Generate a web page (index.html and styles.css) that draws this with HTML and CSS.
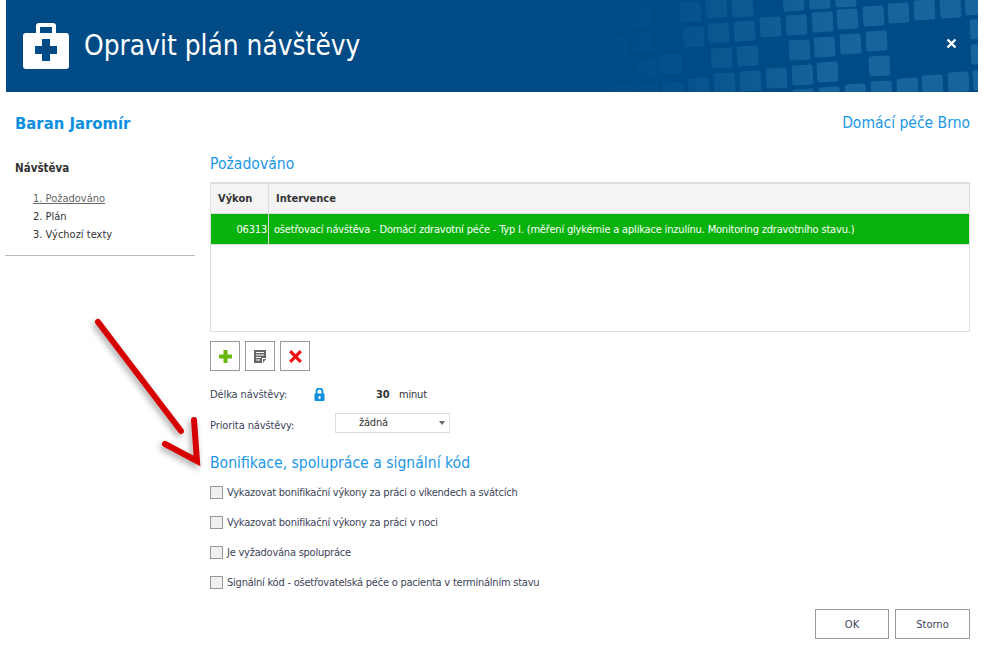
FILE: index.html
```html
<!DOCTYPE html>
<html lang="cs">
<head>
  <meta charset="UTF-8">
  <title>Opravit plán návštěvy</title>
  <link rel="stylesheet" href="styles.css">
</head>
<body>
<div class="page">

  <!-- hlavicka dialogu -->
  <div class="header">
    <svg class="header-bg" width="972" height="92" viewBox="6 0 972 92">
      <defs>
        <linearGradient id="fade" gradientUnits="userSpaceOnUse" x1="640" y1="0" x2="830" y2="0">
          <stop offset="0" stop-color="#024c87"/>
          <stop offset="1" stop-color="#16649b"/>
        </linearGradient>
      </defs>
      <g fill="url(#fade)">
        <rect x="706" y="-2" width="21" height="20" rx="2" transform="rotate(-3 716 8)"/>
        <rect x="732" y="-3" width="21" height="20" rx="2" transform="rotate(-3 742 7)"/>
        <rect x="783" y="-9" width="21" height="20" rx="2" transform="rotate(-3 793 1)"/>
        <rect x="809" y="-11" width="21" height="20" rx="2" transform="rotate(-3 819 -1)"/>
        <rect x="835" y="-13" width="21" height="20" rx="2" transform="rotate(-3 845 -3)"/>
        <rect x="680" y="2" width="21" height="20" rx="2" transform="rotate(-3 690 12)"/>
        <rect x="630" y="7" width="21" height="20" rx="2" transform="rotate(-3 640 17)"/>
        <rect x="632" y="32" width="21" height="20" rx="2" transform="rotate(-3 642 42)"/>
        <rect x="607" y="37" width="21" height="20" rx="2" transform="rotate(-3 617 47)"/>
        <rect x="609" y="60" width="21" height="20" rx="2" transform="rotate(-3 619 70)"/>
        <rect x="635" y="58" width="21" height="20" rx="2" transform="rotate(-3 645 68)"/>
        <rect x="660" y="54" width="21" height="20" rx="2" transform="rotate(-3 670 64)"/>
        <rect x="683" y="27" width="21" height="20" rx="2" transform="rotate(-3 693 37)"/>
        <rect x="613" y="85" width="21" height="20" rx="2" transform="rotate(-3 623 95)"/>
        <rect x="637" y="84" width="21" height="20" rx="2" transform="rotate(-3 647 94)"/>
        <rect x="663" y="83" width="21" height="20" rx="2" transform="rotate(-3 673 93)"/>
        <rect x="688" y="78" width="21" height="20" rx="2" transform="rotate(-3 698 88)"/>
        <rect x="708" y="23" width="21" height="20" rx="2" transform="rotate(-3 718 33)"/>
        <rect x="734" y="21" width="21" height="20" rx="2" transform="rotate(-3 744 31)"/>
        <rect x="760" y="17" width="21" height="20" rx="2" transform="rotate(-3 770 27)"/>
        <rect x="786" y="15" width="21" height="20" rx="2" transform="rotate(-3 796 25)"/>
        <rect x="812" y="12" width="21" height="20" rx="2" transform="rotate(-3 822 22)"/>
        <rect x="837" y="9" width="21" height="20" rx="2" transform="rotate(-3 847 19)"/>
        <rect x="863" y="6" width="21" height="20" rx="2" transform="rotate(-3 873 16)"/>
        <rect x="888" y="3" width="21" height="20" rx="2" transform="rotate(-3 898 13)"/>
        <rect x="914" y="0" width="21" height="20" rx="2" transform="rotate(-3 924 10)"/>
        <rect x="940" y="-2" width="21" height="20" rx="2" transform="rotate(-3 950 8)"/>
        <rect x="965" y="-5" width="21" height="20" rx="2" transform="rotate(-3 975 5)"/>
        <rect x="711" y="48" width="21" height="20" rx="2" transform="rotate(-3 721 58)"/>
        <rect x="737" y="46" width="21" height="20" rx="2" transform="rotate(-3 747 56)"/>
        <rect x="789" y="40" width="21" height="20" rx="2" transform="rotate(-3 799 50)"/>
        <rect x="814" y="37" width="21" height="20" rx="2" transform="rotate(-3 824 47)"/>
        <rect x="840" y="34" width="21" height="20" rx="2" transform="rotate(-3 850 44)"/>
        <rect x="866" y="31" width="21" height="20" rx="2" transform="rotate(-3 876 41)"/>
        <rect x="970" y="19" width="21" height="20" rx="2" transform="rotate(-3 980 29)"/>
        <rect x="971" y="44" width="21" height="20" rx="2" transform="rotate(-3 981 54)"/>
        <rect x="714" y="73" width="21" height="20" rx="2" transform="rotate(-3 724 83)"/>
        <rect x="740" y="71" width="21" height="20" rx="2" transform="rotate(-3 750 81)"/>
        <rect x="766" y="68" width="21" height="20" rx="2" transform="rotate(-3 776 78)"/>
        <rect x="792" y="65" width="21" height="20" rx="2" transform="rotate(-3 802 75)"/>
        <rect x="817" y="62" width="21" height="20" rx="2" transform="rotate(-3 827 72)"/>
        <rect x="869" y="56" width="21" height="20" rx="2" transform="rotate(-3 879 66)"/>
        <rect x="793" y="89" width="21" height="20" rx="2" transform="rotate(-3 803 99)"/>
        <rect x="819" y="87" width="21" height="20" rx="2" transform="rotate(-3 829 97)"/>
        <rect x="845" y="84" width="21" height="20" rx="2" transform="rotate(-3 855 94)"/>
        <rect x="871" y="81" width="21" height="20" rx="2" transform="rotate(-3 881 91)"/>
        <rect x="897" y="78" width="21" height="20" rx="2" transform="rotate(-3 907 88)"/>
        <rect x="922" y="75" width="21" height="20" rx="2" transform="rotate(-3 932 85)"/>
        <rect x="948" y="72" width="21" height="20" rx="2" transform="rotate(-3 958 82)"/>
        <rect x="973" y="70" width="21" height="20" rx="2" transform="rotate(-3 983 80)"/>
      </g>
    </svg>
    <svg class="header-icon" width="46" height="46" viewBox="0 0 46 46">
      <path d="M13 10V3a3 3 0 0 1 3-3h14a3 3 0 0 1 3 3v7h-4V4H17v6z" fill="#fff"/>
      <rect x="0" y="10" width="46" height="36" rx="3" fill="#fff"/>
      <path d="M19 16h8v7h7v8h-7v7h-8v-7h-7v-8h7z" fill="#004a85"/>
    </svg>
    <h1 class="header-title">Opravit plán návštěvy</h1>
    <svg class="header-close" width="11" height="11" viewBox="0 0 11 11">
      <path d="M1.5 1.5l8 8M9.5 1.5l-8 8" stroke="#fff" stroke-width="2.4"/>
    </svg>
  </div>

  <div class="top-row">
    <div class="patient">Baran Jaromír</div>
    <div class="agency">Domácí péče Brno</div>
  </div>

  <div class="main">
    <div class="side">
      <div class="side-title">Návštěva</div>
      <ul class="side-menu">
        <li class="active">1. Požadováno</li>
        <li>2. Plán</li>
        <li>3. Výchozí texty</li>
      </ul>
    </div>

    <div class="content">
      <h2 class="section">Požadováno</h2>

      <div class="grid">
        <div class="grid-row grid-head">
          <div class="col-code">Výkon</div>
          <div class="col-text">Intervence</div>
        </div>
        <div class="grid-row grid-selected">
          <div class="col-code">06313</div>
          <div class="col-text">ošetřovací návštěva - Domácí zdravotní péče - Typ I. (měření glykémie a aplikace inzulínu. Monitoring zdravotního stavu.)</div>
        </div>
      </div>

      <div class="toolbar">
        <button class="tool">
          <svg width="13" height="13" viewBox="0 0 13 13"><path d="M4.500 0h4v4.500H13v4H8.500V13h-4V8.500H0v-4h4.500z" fill="#6cb70e"/></svg>
        </button>
        <button class="tool">
          <svg width="12" height="13" viewBox="0 0 12 13">
            <path d="M0 0h12v8H8v5H0z" fill="#666"/>
            <path d="M9 9h3l-3 4z" fill="#666"/>
            <path d="M2 2.500h8M2 5h8M2 7.500h5M2 10h4" stroke="#fff" stroke-width="1"/>
          </svg>
        </button>
        <button class="tool">
          <svg width="13" height="13" viewBox="0 0 13 13"><path d="M1.200 1.200l10.600 10.600M11.800 1.200L1.200 11.800" stroke="#f01010" stroke-width="3.200"/></svg>
        </button>
      </div>

      <div class="field field-length">
        <span class="field-label">Délka návštěvy:</span>
        <svg class="lock" width="11" height="13" viewBox="0 0 11 13">
          <path d="M2.500 6V3.500a3 3 0 0 1 6 0V6" fill="none" stroke="#0a8fdc" stroke-width="1.800"/>
          <rect x="0.500" y="5.500" width="10" height="7.500" rx="1" fill="#0a8fdc"/>
          <rect x="4.500" y="8" width="2" height="3" fill="#fff"/>
        </svg>
        <b class="field-num">30</b>
        <span class="field-unit">minut</span>
      </div>

      <div class="field field-priority">
        <span class="field-label">Priorita návštěvy:</span>
        <div class="select">žádná<span class="select-arrow"></span></div>
      </div>

      <h2 class="section section-second">Bonifikace, spolupráce a signální kód</h2>

      <label class="check"><span class="box"></span>Vykazovat bonifikační výkony za práci o víkendech a svátcích</label>
      <label class="check"><span class="box"></span>Vykazovat bonifikační výkony za práci v noci</label>
      <label class="check"><span class="box"></span>Je vyžadována spolupráce</label>
      <label class="check"><span class="box"></span>Signální kód - ošetřovatelská péče o pacienta v terminálním stavu</label>

      <div class="actions">
        <button class="btn btn-ok">OK</button>
        <button class="btn btn-cancel">Storno</button>
      </div>
    </div>
  </div>

  <!-- cervena sipka pres obsah -->
  <svg class="arrow" width="130" height="170" viewBox="90 310 130 170">
    <path d="M98 322L181 431M194 420L197 461L165 444" fill="none" stroke="#d60000" stroke-width="6" stroke-linecap="round" stroke-linejoin="miter"/>
  </svg>
</div>
</body>
</html>
```

FILE: styles.css
```css
body {
  margin: 0;
  background-color: #fff;
  font-family: "DejaVu Sans", sans-serif;
  font-stretch: condensed;
  font-size: 11px;
  letter-spacing: -0.2px;
  color: #333;
}

.page {
  position: relative;
  width: 973px;
  height: 655px;
  margin-left: 5px;
  overflow: hidden;
}

.header {
  position: relative;
  display: flex;
  align-items: center;
  height: 92px;
  margin-left: 1px;
  padding-left: 17px;
  background-color: #004a85;
  color: #fff;
  overflow: hidden;
}
.header-bg {
  position: absolute;
  top: 0;
  left: 0;
}
.header-icon {
  position: relative;
  margin-top: -1px;
}
.header-title {
  position: relative;
  margin: 0 0 2px 15px;
  font-size: 27.800px;
  font-weight: normal;
  letter-spacing: 0;
}
.header-close {
  position: absolute;
  top: 38px;
  right: 21px;
}

.top-row {
  display: flex;
  justify-content: space-between;
  align-items: center;
  height: 26px;
  margin-top: 18px;
  padding: 0 8px 0 10px;
  color: #0e90e0;
  letter-spacing: 0;
}
.patient {
  font-size: 16.500px;
  font-weight: bold;
}
.agency {
  font-size: 15.500px;
  color: #1a97e4;
}

.main {
  display: flex;
  margin-top: 17px;
}
.side {
  width: 190px;
  height: 98px;
  border-bottom: 1px solid #bbb;
  margin-top: 4px;
}
.side-title {
  margin: 4px 0 0 10px;
  font-weight: bold;
  font-size: 11.500px;
  line-height: 14px;
  letter-spacing: 0;
}
.side-menu {
  list-style: none;
  margin: 15px 0 0;
  padding: 0 0 0 28px;
  line-height: 18px;
  letter-spacing: 0;
}
.side-menu .active {
  color: #666;
  text-decoration: underline;
}

.content {
  width: 760px;
  margin-left: 15px;
}
.section {
  margin: 0;
  font-size: 15.600px;
  font-weight: normal;
  line-height: 22px;
  letter-spacing: 0;
  color: #1a97e4;
}
.section-second {
  margin-top: 19px;
}

.grid {
  height: 147px;
  margin-top: 7px;
  border: 1px solid #ddd;
  border-top-width: 2px;
}
.grid-row {
  display: flex;
  align-items: center;
  border-bottom: 1px solid #ddd;
}
.grid-head {
  height: 29px;
  background-color: #f4f4f4;
  font-weight: bold;
  letter-spacing: 0;
}
.grid-selected {
  height: 30px;
  background-color: #08b20a;
  color: #fff;
  letter-spacing: -0.180px;
}
.col-code {
  display: flex;
  align-items: center;
  width: 58px;
  height: 100%;
  padding: 0 1px 0 7px;
  box-sizing: border-box;
  border-right: 1px solid #ddd;
}
.grid-selected .col-code {
  justify-content: flex-end;
}
.col-text {
  padding-left: 5px;
  white-space: nowrap;
}
.grid-head .col-text {
  padding-left: 7px;
}

.toolbar {
  display: flex;
  gap: 5px;
  margin-top: 9px;
}
.tool {
  display: flex;
  align-items: center;
  justify-content: center;
  width: 30px;
  height: 30px;
  padding: 0;
  background-color: #fff;
  border: 1px solid #999;
}

.field {
  display: flex;
  align-items: center;
  height: 20px;
}
.field-length {
  margin-top: 13px;
}
.field-priority {
  margin-top: 9px;
}
.field-label {
  width: 125px;
  color: #3c4358;
  letter-spacing: -0.100px;
}
.field-priority .field-label {
  margin-top: 4px;
}
.lock {
  margin-left: -21px;
  margin-right: 51px;
}
.field-num {
  width: 13px;
  text-align: right;
}
.field-unit {
  margin-left: 10px;
}
.select {
  position: relative;
  width: 115px;
  height: 20px;
  box-sizing: border-box;
  padding-left: 23px;
  border: 1px solid #ddd;
  line-height: 18px;
}
.select-arrow {
  position: absolute;
  top: 7px;
  right: 4px;
  border: 3px solid transparent;
  border-top: 4px solid #666;
  border-bottom: 0;
}

.check {
  display: flex;
  align-items: center;
  height: 30px;
  color: #3c4358;
  letter-spacing: -0.230px;
}
.section-second + .check {
  margin-top: 3px;
}
.box {
  width: 11px;
  height: 11px;
  margin-right: 4px;
  border: 1px solid #999;
  background-color: #f0f0f0;
}

.actions {
  display: flex;
  justify-content: flex-end;
  gap: 6px;
  margin-top: 12px;
}
.btn {
  height: 30px;
  padding: 0;
  background-color: #fff;
  border: 1px solid #999;
  font: inherit;
  color: #3c4358;
}
.btn-ok {
  width: 74px;
}
.btn-cancel {
  width: 75px;
}

.arrow {
  position: absolute;
  top: 310px;
  left: 85px;
  filter: drop-shadow(-2px 3px 3px rgba(0, 0, 0, 0.35));
}
```
